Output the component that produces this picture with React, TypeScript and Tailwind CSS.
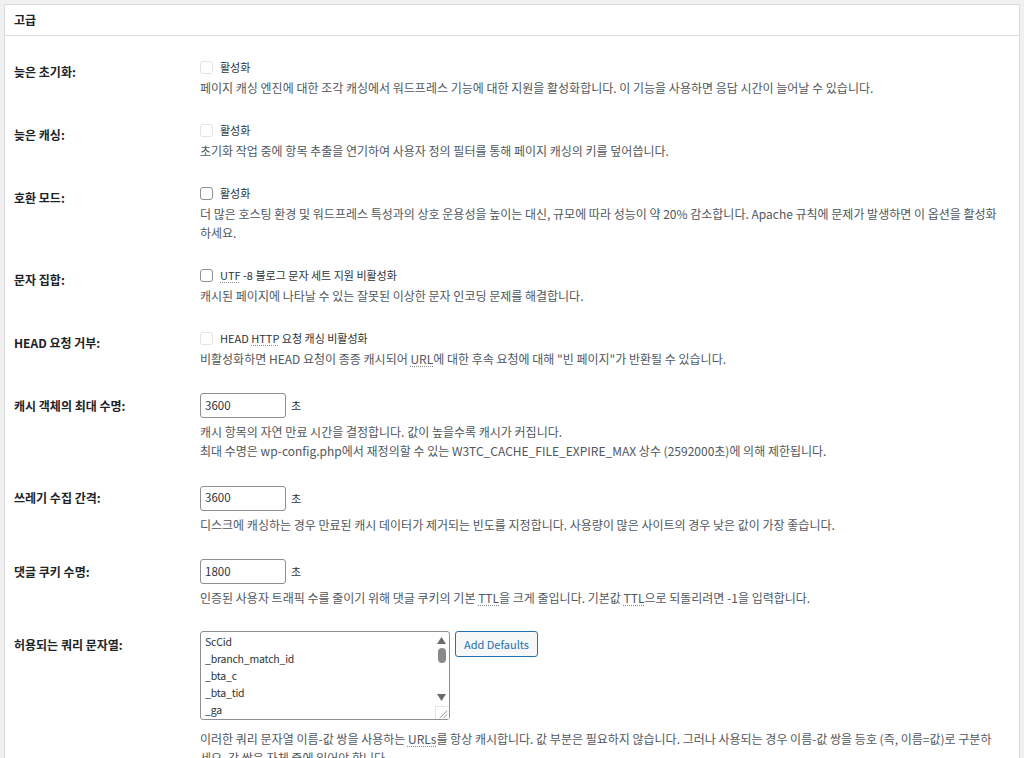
import React from "react";

const font = { fontFamily: '"Noto Sans CJK KR", "Noto Sans", sans-serif' };

function Abbr({ children }: { children: React.ReactNode }) {
  return <span className="underline decoration-dotted decoration-[#8c8f94] underline-offset-2">{children}</span>;
}

function Row({ label, children }: { label: string; children: React.ReactNode }) {
  return (
    <div className="flex py-3">
      <div className="w-[195px] shrink-0 pl-[9px] pt-1 text-[12px] font-bold leading-5 text-[#1d2327]">{label}</div>
      <div className="min-w-0 flex-1 pr-[8px]">{children}</div>
    </div>
  );
}

function Check({ children, enabled = false }: { children: React.ReactNode; enabled?: boolean }) {
  return (
    <div className="flex h-5 items-center gap-[7px] text-[11px] text-[#2c3338]">
      <span
        className={
          enabled
            ? "h-[13px] w-[13px] rounded-[3px] border border-[#8c8f94] bg-white"
            : "h-[13px] w-[13px] rounded-[3px] border border-[#e4e4e6] bg-white"
        }
      />
      <span>{children}</span>
    </div>
  );
}

function Desc({ children, className = "" }: { children: React.ReactNode; className?: string }) {
  return <p className={`text-[12px] leading-[19px] text-[#50575e] ${className}`}>{children}</p>;
}

function NumberField({ value }: { value: string }) {
  return (
    <div className="flex h-7 items-center text-[11px] text-[#2c3338]">
      <div className="flex h-[25px] w-[86px] items-center rounded-[3px] border border-[#8c8f94] bg-white pl-[4px] text-[11.5px]">
        {value}
      </div>
      <span className="ml-[5px]">초</span>
    </div>
  );
}

function QueryList() {
  const items = ["ScCid", "_branch_match_id", "_bta_c", "_bta_tid", "_ga"];
  return (
    <div className="flex items-start gap-[5px]">
      <div className="relative flex h-[89px] w-[250px] rounded-[3px] border border-[#8c8f94] bg-white">
        <div className="flex-1 pl-[4px] pt-[1px] text-[10.5px] leading-[17px] tracking-[-0.2px] text-[#2c3338]">
          {items.map((t) => (
            <div key={t}>{t}</div>
          ))}
        </div>
        <div className="flex w-[15px] flex-col items-center pt-[5px]">
          <svg width="9" height="7" viewBox="0 0 9 7">
            <path d="M4.5 0 L9 7 L0 7 Z" fill="#6b6b6b" />
          </svg>
          <div className="mt-[4px] h-[15px] w-[8px] rounded-full bg-[#8a8a8a]" />
          <div className="flex-1" />
          <svg width="9" height="7" viewBox="0 0 9 7" className="mb-[18px]">
            <path d="M0 0 L9 0 L4.5 7 Z" fill="#6b6b6b" />
          </svg>
        </div>
        <svg
          className="absolute bottom-0 right-0 border-l border-t border-[#e6e6e6] bg-white"
          width="14"
          height="13"
          viewBox="0 0 14 13"
        >
          <path d="M12 4 L4 12 M12 8 L8 12" stroke="#8c8f94" strokeWidth="1" />
        </svg>
      </div>
      <button className="h-[26px] rounded-[3px] border border-[#2271b1] bg-[#f6f7f7] px-[8px] text-[11px] text-[#2271b1]">
        Add Defaults
      </button>
    </div>
  );
}

export default function App() {
  return (
    <div style={font} className="h-[758px] w-[1024px] overflow-hidden bg-[#f0f0f1] pl-[4px] pr-[4px] pt-[4px]">
      <div className="h-[800px] border border-[#dcdcde] bg-white">
        <div className="flex h-[31px] items-center border-b border-[#dcdcde] pl-[9px] text-[12px] font-bold text-[#1d2327]">
          고급
        </div>
        <div className="pt-[9.5px]">
          <Row label="늦은 초기화:">
            <Check>활성화</Check>
            <Desc>
              페이지 캐싱 엔진에 대한 조각 캐싱에서 워드프레스 기능에 대한 지원을 활성화합니다. 이 기능을 사용하면 응답 시간이 늘어날 수 있습니다.
            </Desc>
          </Row>
          <Row label="늦은 캐싱:">
            <Check>활성화</Check>
            <Desc>초기화 작업 중에 항목 추출을 연기하여 사용자 정의 필터를 통해 페이지 캐싱의 키를 덮어씁니다.</Desc>
          </Row>
          <Row label="호환 모드:">
            <Check enabled>활성화</Check>
            <Desc>
              <span className="whitespace-nowrap">
                더 많은 호스팅 환경 및 워드프레스 특성과의 상호 운용성을 높이는 대신, 규모에 따라 성능이 약 20% 감소합니다. Apache 규칙에 문제가 발생하면 이 옵션을 활성화
              </span>
              <br />
              하세요.
            </Desc>
          </Row>
          <Row label="문자 집합:">
            <Check enabled>
              <Abbr>UTF</Abbr> -8 블로그 문자 세트 지원 비활성화
            </Check>
            <Desc>캐시된 페이지에 나타날 수 있는 잘못된 이상한 문자 인코딩 문제를 해결합니다.</Desc>
          </Row>
          <Row label="HEAD 요청 거부:">
            <Check>
              HEAD <Abbr>HTTP</Abbr> 요청 캐싱 비활성화
            </Check>
            <Desc>
              비활성화하면 HEAD 요청이 종종 캐시되어 <Abbr>URL</Abbr>에 대한 후속 요청에 대해 "빈 페이지"가 반환될 수 있습니다.
            </Desc>
          </Row>
          <Row label="캐시 객체의 최대 수명:">
            <NumberField value="3600" />
            <Desc className="mt-[2.5px]">
              캐시 항목의 자연 만료 시간을 결정합니다. 값이 높을수록 캐시가 커집니다.
              <br />
              최대 수명은 wp-config.php에서 재정의할 수 있는 W3TC_CACHE_FILE_EXPIRE_MAX 상수 (2592000초)에 의해 제한됩니다.
            </Desc>
          </Row>
          <Row label="쓰레기 수집 간격:">
            <NumberField value="3600" />
            <Desc className="mt-[2.5px]">
              디스크에 캐싱하는 경우 만료된 캐시 데이터가 제거되는 빈도를 지정합니다. 사용량이 많은 사이트의 경우 낮은 값이 가장 좋습니다.
            </Desc>
          </Row>
          <Row label="댓글 쿠키 수명:">
            <NumberField value="1800" />
            <Desc className="mt-[2.5px]">
              인증된 사용자 트래픽 수를 줄이기 위해 댓글 쿠키의 기본 <Abbr>TTL</Abbr>을 크게 줄입니다. 기본값 <Abbr>TTL</Abbr>으로 되돌리려면 -1을 입력합니다.
            </Desc>
          </Row>
          <Row label="허용되는 쿼리 문자열:">
            <QueryList />
            <Desc className="mt-[9px]">
              <span className="whitespace-nowrap">
                이러한 쿼리 문자열 이름-값 쌍을 사용하는 <Abbr>URLs</Abbr>를 항상 캐시합니다. 값 부분은 필요하지 않습니다. 그러나 사용되는 경우 이름-값 쌍을 등호 (즉, 이름=값)로 구분하
              </span>
              <br />
              세요. 각 쌍은 자체 줄에 있어야 합니다.
            </Desc>
          </Row>
        </div>
      </div>
    </div>
  );
}
